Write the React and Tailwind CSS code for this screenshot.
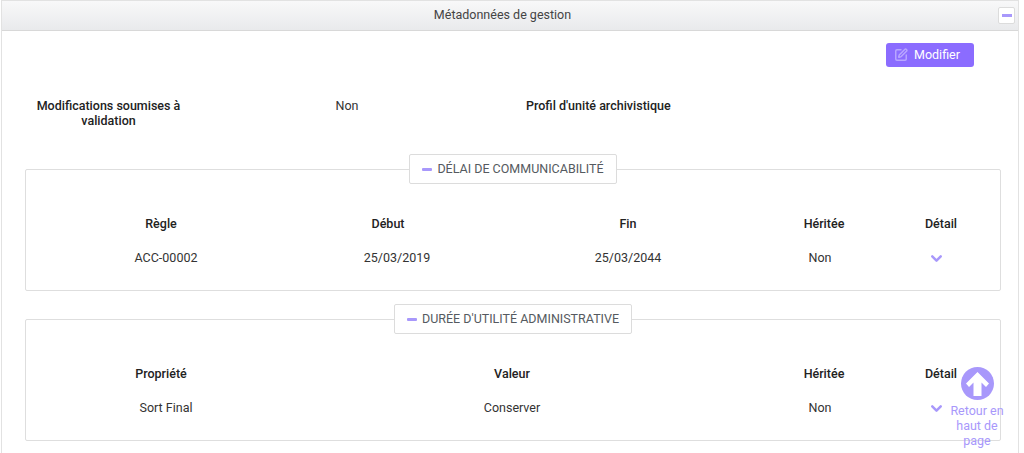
import { ChevronDown, SquarePen } from 'lucide-react';

function Legend({ title }) {
  return (
    <div className="absolute -top-[16px] left-0 right-0 flex justify-center">
      <div className="h-[30px] px-[12px] flex items-center gap-[5px] bg-white border border-[#dcdcdc] rounded-[2px] text-[12.5px] text-[#555a60]">
        <span className="w-[10px] h-[3px] rounded-[1px] bg-[#a898fb]" />
        <span>{title}</span>
      </div>
    </div>
  );
}

function RuleBox({ title, columns, cols, valueCols, values, className }) {
  return (
    <div className={`relative h-[122px] border border-[#dedede] rounded-[2px] ${className}`}>
      <Legend title={title} />
      <div className={`grid ${cols} ml-[20px] pt-[45px] h-[79px] text-[12.5px] text-center`}>
        {columns.map((c) => (
          <div key={c} className="font-medium text-[#222]">{c}</div>
        ))}
      </div>
      <div className={`grid ${valueCols} ml-[20px] text-[12.5px] text-center`}>
        {values.map((v) => (
          <div key={v} className="text-[#333]">{v}</div>
        ))}
        <div className="flex justify-center pt-[1px] text-[#a898fb]">
          <ChevronDown size={17} strokeWidth={3.5} />
        </div>
      </div>
    </div>
  );
}

export default function App() {
  return (
    <div className="relative w-[1024px] h-[453px] overflow-hidden bg-white font-['Roboto',sans-serif]">
      <div className="ml-px mr-[5px] h-[453px] border-x border-t border-[#e2e2e2]">
        {/* Panel header */}
        <header className="relative h-[30px] flex items-center justify-center pr-[15px] bg-gradient-to-b from-[#f8f8f9] to-[#e9eaec] border-b border-[#d8d8d8] text-[12.5px] text-[#444]">
          <span>Métadonnées de gestion</span>
          <div className="absolute right-[3px] top-[6px] w-[17px] h-[17px] flex items-center justify-center bg-white border border-[#dcdcdc] rounded-[2px]">
            <span className="w-[10px] h-[3px] bg-[#a898fb]" />
          </div>
        </header>

        <div className="flex justify-end pt-[12px] pr-[44px]">
          <button className="w-[88px] h-[24px] pr-[6px] flex items-center justify-center gap-[6px] bg-[#8b6cff] rounded-[3px] text-[12.5px] text-white">
            <SquarePen size={14} strokeWidth={2.5} className="opacity-40" />
            Modifier
          </button>
        </div>

        {/* Top fields */}
        <div className="grid grid-cols-[165px_150px_65px_170px] ml-[24px] mt-[31px] h-[71px] text-[12.5px] leading-[15px] text-center">
          <div className="font-medium text-[#222]">Modifications soumises à validation</div>
          <div className="ml-[81px] w-[150px] text-[#333]">Non</div>
          <div />
          <div className="ml-[120px] font-medium text-[#222] whitespace-nowrap">Profil d'unité archivistique</div>
        </div>

        <div className="ml-[23px] mr-[17px]">
          <RuleBox
            title="DÉLAI DE COMMUNICABILITÉ"
            cols="grid-cols-[230px_224px_256px_136px_98px]"
            valueCols="grid-cols-[240px_222px_240px_144px_88px]"
            columns={['Règle', 'Début', 'Fin', 'Héritée', 'Détail']}
            values={['ACC-00002', '25/03/2019', '25/03/2044', 'Non']}
          />
          <RuleBox
            title="DURÉE D'UTILITÉ ADMINISTRATIVE"
            className="mt-[28px]"
            cols="grid-cols-[230px_472px_152px_82px]"
            valueCols="grid-cols-[240px_452px_164px_68px]"
            columns={['Propriété', 'Valeur', 'Héritée', 'Détail']}
            values={['Sort Final', 'Conserver', 'Non']}
          />
        </div>
      </div>

      {/* Back to top overlay */}
      <div className="absolute left-[949px] top-[367px] w-[56px] flex flex-col items-center text-[12.5px] leading-[15px] text-center text-[#a898fb]">
        <svg width="33" height="33" viewBox="0 0 33 33" className="mb-[3px]">
          <circle cx="16.5" cy="16.5" r="16.5" fill="#a898fb" />
          <path d="M16.5 5 L28 16.5 L25 20 L20.5 15.5 L20.5 29 L12.5 29 L12.5 15.5 L8 20 L5 16.5 Z" fill="#fff" />
        </svg>
        Retour en haut de page
      </div>
    </div>
  );
}
